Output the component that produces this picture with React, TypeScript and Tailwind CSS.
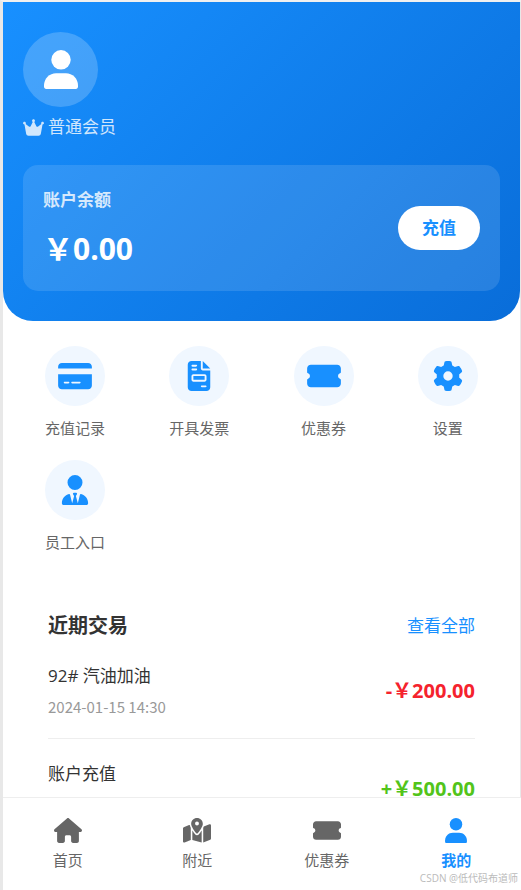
import { useState } from "react";
import type { ComponentType } from "react";
import {
  FaCreditCard,
  FaCrown,
  FaFileInvoice,
  FaGear,
  FaHouse,
  FaMapLocationDot,
  FaTicketSimple,
  FaUserTie,
} from "react-icons/fa6";

interface Entry {
  label: string;
  icon: ComponentType<{ className?: string }>;
}

interface Transaction {
  title: string;
  time?: string;
  amount: string;
  income: boolean;
}

function UserIcon({ className }: { className?: string }) {
  return (
    <svg viewBox="0 0 448 512" fill="currentColor" className={className} aria-hidden="true">
      <circle cx="224" cy="128" r="128" />
      <path d="M160 304h128c88 0 160 72 160 160v20c0 15.500-12.500 28-28 28H28c-15.500 0-28-12.500-28-28v-20c0-88 72-160 160-160z" />
    </svg>
  );
}

const services: Entry[] = [
  { label: "充值记录", icon: FaCreditCard },
  { label: "开具发票", icon: FaFileInvoice },
  { label: "优惠券", icon: FaTicketSimple },
  { label: "设置", icon: FaGear },
  { label: "员工入口", icon: FaUserTie },
];

const transactions: Transaction[] = [
  { title: "92# 汽油加油", time: "2024-01-15 14:30", amount: "-￥200.00", income: false },
  { title: "账户充值", amount: "+￥500.00", income: true },
];

const tabs: Entry[] = [
  { label: "首页", icon: FaHouse },
  { label: "附近", icon: FaMapLocationDot },
  { label: "优惠券", icon: FaTicketSimple },
  { label: "我的", icon: UserIcon },
];

function ProfileHeader() {
  return (
    <header className="rounded-b-[30px] bg-linear-135 from-[#1890ff] to-[#096dd9] px-5 pt-[30px] pb-[30px] text-white">
      <div className="flex h-[75px] w-[75px] items-center justify-center rounded-full bg-white/20">
        <UserIcon className="h-[39px] w-[34px]" />
      </div>
      <div className="mt-2 flex items-center gap-1 text-[17px] leading-6 opacity-80">
        <FaCrown className="h-[19px] w-[21px]" />
        <span>普通会员</span>
      </div>

      {/* Balance card */}
      <div className="mt-[26px] flex items-center justify-between rounded-[15px] bg-white/12 p-5">
        <div>
          <p className="text-[17px] leading-[30px] font-bold opacity-80">账户余额</p>
          <p className="mt-3 text-[30px] leading-11 font-bold">￥0.00</p>
        </div>
        <button type="button" className="h-11 rounded-full bg-white px-6 text-[17px] font-bold text-[#1890ff]">
          充值
        </button>
      </div>
    </header>
  );
}

function ServiceGrid() {
  return (
    <section className="grid grid-cols-4 gap-y-[22px] px-2.5 pt-[25px]">
      {services.map(({ label, icon: Icon }) => (
        <button key={label} type="button" className="flex flex-col items-center gap-3">
          <span className="flex h-[60px] w-[60px] items-center justify-center rounded-full bg-[#f0f7ff] text-[#1890ff]">
            <Icon className="h-[30px] w-[34px]" />
          </span>
          <span className="text-[15px] leading-5 text-[#666]">{label}</span>
        </button>
      ))}
    </section>
  );
}

function RecentTransactions() {
  return (
    <section className="mt-[59px] px-[45px]">
      <div className="flex items-center justify-between">
        <h2 className="text-xl leading-[30px] font-bold text-[#333]">近期交易</h2>
        <a href="#all" className="text-[17px] leading-[30px] text-[#1890ff]">查看全部</a>
      </div>
      <ul>
        {transactions.map((item) => (
          <li
            key={item.title}
            className="flex items-center justify-between border-b border-[#eee] pt-[22px] pb-5"
          >
            <div>
              <p className="text-[17px] leading-[26px] text-[#333]">{item.title}</p>
              <p className="mt-[7px] h-[22px] font-['Noto_Sans_CJK_SC',sans-serif] text-[15px] leading-[22px] text-[#999]">
                {item.time}
              </p>
            </div>
            <span className={`text-xl font-bold ${item.income ? "text-[#52c41a]" : "text-[#f5222d]"}`}>
              {item.amount}
            </span>
          </li>
        ))}
      </ul>
    </section>
  );
}

function App() {
  const [active, setActive] = useState("我的");

  return (
    <div className="relative flex h-screen flex-col border-t-2 border-l-[3px] border-t-[#f0f0f0] border-l-[#e8e8e8] bg-white font-['Open_Sans','Noto_Sans_CJK_SC',sans-serif]">
      <main className="min-h-0 flex-1 overflow-y-auto border-r border-[#e8e8e8] [scrollbar-width:none]">
        <ProfileHeader />
        <ServiceGrid />
        <RecentTransactions />
      </main>

      {/* Tab bar */}
      <nav className="grid grid-cols-4 border-t border-[#eee] bg-white py-5">
        {tabs.map(({ label, icon: Icon }) => (
          <button
            key={label}
            type="button"
            onClick={() => setActive(label)}
            className={`flex flex-col items-center gap-[7px] ${
              active === label ? "font-bold text-[#1890ff]" : "text-[#666]"
            }`}
          >
            <Icon className="h-[25px] w-7" />
            <span className="text-[15px] leading-5">{label}</span>
          </button>
        ))}
      </nav>

      <span className="absolute right-[3px] bottom-1 text-[10px] leading-4 text-[#bbb]">CSDN @低代码布道师</span>
    </div>
  );
}

export default App;
